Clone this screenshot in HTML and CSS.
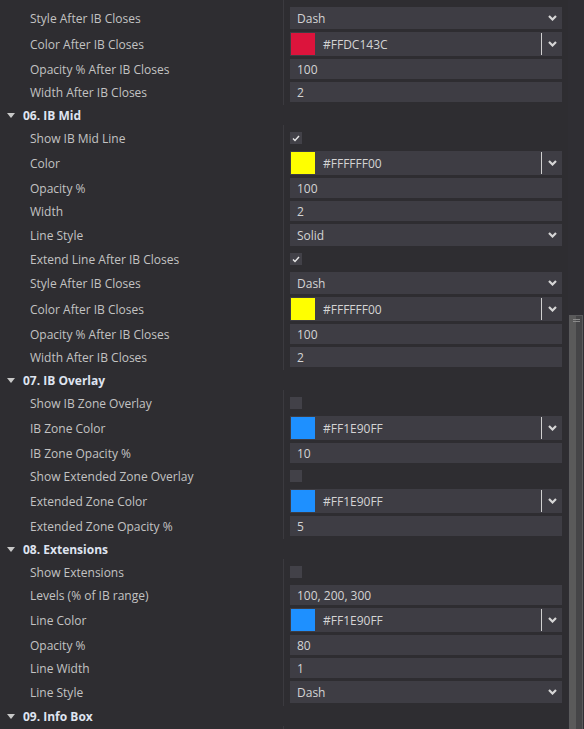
FILE: index.html
```html
<!DOCTYPE html>
<html lang="en">
<head>
  <meta charset="UTF-8" />
  <title>Indicator Settings</title>
  <link rel="stylesheet" href="styles.css">
</head>
<body>

<div class="panel">

  <div class="section-body first">
    <div class="row"><span class="label">Style After IB Closes</span><div class="select">Dash<span class="chev"><svg width="9" height="6" viewBox="0 0 9 6"><path d="M1 1 L4.5 4.5 L8 1" /></svg></span></div></div>
    <div class="row"><span class="label">Color After IB Closes</span><div class="color"><span class="swatch red"></span><span class="hex">#FFDC143C</span><span class="sep"></span><span class="chev"><svg width="9" height="6" viewBox="0 0 9 6"><path d="M1 1 L4.5 4.5 L8 1" /></svg></span></div></div>
    <div class="row"><span class="label">Opacity % After IB Closes</span><div class="input">100</div></div>
    <div class="row"><span class="label">Width After IB Closes</span><div class="input">2</div></div>
  </div>

  <div class="section-head"><span class="tri"></span>06. IB Mid</div>
  <div class="section-body">
    <div class="row check-row"><span class="label">Show IB Mid Line</span><span class="checkbox on"><svg width="8" height="7" viewBox="0 0 8 7"><path d="M1 3.5 L3 5.5 L7 1" /></svg></span></div>
    <div class="row"><span class="label">Color</span><div class="color"><span class="swatch yellow"></span><span class="hex">#FFFFFF00</span><span class="sep"></span><span class="chev"><svg width="9" height="6" viewBox="0 0 9 6"><path d="M1 1 L4.5 4.5 L8 1" /></svg></span></div></div>
    <div class="row"><span class="label">Opacity %</span><div class="input">100</div></div>
    <div class="row"><span class="label">Width</span><div class="input">2</div></div>
    <div class="row"><span class="label">Line Style</span><div class="select">Solid<span class="chev"><svg width="9" height="6" viewBox="0 0 9 6"><path d="M1 1 L4.5 4.5 L8 1" /></svg></span></div></div>
    <div class="row check-row"><span class="label">Extend Line After IB Closes</span><span class="checkbox on"><svg width="8" height="7" viewBox="0 0 8 7"><path d="M1 3.5 L3 5.5 L7 1" /></svg></span></div>
    <div class="row"><span class="label">Style After IB Closes</span><div class="select">Dash<span class="chev"><svg width="9" height="6" viewBox="0 0 9 6"><path d="M1 1 L4.5 4.5 L8 1" /></svg></span></div></div>
    <div class="row"><span class="label">Color After IB Closes</span><div class="color"><span class="swatch yellow"></span><span class="hex">#FFFFFF00</span><span class="sep"></span><span class="chev"><svg width="9" height="6" viewBox="0 0 9 6"><path d="M1 1 L4.5 4.5 L8 1" /></svg></span></div></div>
    <div class="row"><span class="label">Opacity % After IB Closes</span><div class="input">100</div></div>
    <div class="row"><span class="label">Width After IB Closes</span><div class="input">2</div></div>
  </div>

  <div class="section-head"><span class="tri"></span>07. IB Overlay</div>
  <div class="section-body">
    <div class="row check-row"><span class="label">Show IB Zone Overlay</span><span class="checkbox"></span></div>
    <div class="row"><span class="label">IB Zone Color</span><div class="color"><span class="swatch blue"></span><span class="hex">#FF1E90FF</span><span class="sep"></span><span class="chev"><svg width="9" height="6" viewBox="0 0 9 6"><path d="M1 1 L4.5 4.5 L8 1" /></svg></span></div></div>
    <div class="row"><span class="label">IB Zone Opacity %</span><div class="input">10</div></div>
    <div class="row check-row"><span class="label">Show Extended Zone Overlay</span><span class="checkbox"></span></div>
    <div class="row"><span class="label">Extended Zone Color</span><div class="color"><span class="swatch blue"></span><span class="hex">#FF1E90FF</span><span class="sep"></span><span class="chev"><svg width="9" height="6" viewBox="0 0 9 6"><path d="M1 1 L4.5 4.5 L8 1" /></svg></span></div></div>
    <div class="row"><span class="label">Extended Zone Opacity %</span><div class="input">5</div></div>
  </div>

  <div class="section-head"><span class="tri"></span>08. Extensions</div>
  <div class="section-body">
    <div class="row check-row"><span class="label">Show Extensions</span><span class="checkbox"></span></div>
    <div class="row"><span class="label">Levels (% of IB range)</span><div class="input">100, 200, 300</div></div>
    <div class="row"><span class="label">Line Color</span><div class="color"><span class="swatch blue"></span><span class="hex">#FF1E90FF</span><span class="sep"></span><span class="chev"><svg width="9" height="6" viewBox="0 0 9 6"><path d="M1 1 L4.5 4.5 L8 1" /></svg></span></div></div>
    <div class="row"><span class="label">Opacity %</span><div class="input">80</div></div>
    <div class="row"><span class="label">Line Width</span><div class="input">1</div></div>
    <div class="row"><span class="label">Line Style</span><div class="select">Dash<span class="chev"><svg width="9" height="6" viewBox="0 0 9 6"><path d="M1 1 L4.5 4.5 L8 1" /></svg></span></div></div>
  </div>

  <div class="section-head"><span class="tri"></span>09. Info Box</div>
  <div class="section-body"></div>

</div>

<div class="scrollbar">
  <div class="thumb"><span class="grip"></span></div>
</div>

</body>
</html>
```

FILE: styles.css
```css
* {
  box-sizing: border-box;
  margin: 0;
  padding: 0;
}

body {
  background-color: #2e2d31;
  font-family: "Open Sans", Arial, sans-serif;
  font-size: 12px;
  color: #c3c3c3;
  display: flex;
  height: 729px;
  overflow: hidden;
}

.panel {
  width: 568px;
  flex: none;
}

/* section header with the little down triangle */
.section-head {
  height: 20px;
  display: flex;
  align-items: center;
  padding-left: 7px;
  font-weight: bold;
  color: #dfe4f0;
}

.tri {
  width: 0;
  height: 0;
  border-left: 4.5px solid transparent;
  border-right: 4.5px solid transparent;
  border-top: 5px solid #c8c8c8;
  margin-right: 8px;
}

/* rows of a section, with the divider line between labels and inputs */
.section-body {
  display: flex;
  flex-direction: column;
  gap: 3px;
  padding: 3px 0;
  background: linear-gradient(#3b3a3f, #3b3a3f) 283px 0 / 1px 100% no-repeat;
}

.section-body.first {
  padding-top: 7px;
}

.section-body:empty {
  padding: 0;
  height: 10px;
}

.row {
  display: grid;
  grid-template-columns: 290px 272px;
  align-items: center;
}

.check-row {
  height: 20px;
}

.label {
  padding-left: 30px;
  white-space: nowrap;
}

.input,
.select,
.color {
  background-color: #3e3d44;
  color: #d4d4d4;
  display: flex;
  align-items: center;
}

.input {
  height: 20px;
  padding-left: 7px;
}

.select {
  height: 22px;
  padding-left: 7px;
  justify-content: space-between;
}

.color {
  height: 24px;
}

.swatch {
  width: 24px;
  height: 22px;
  margin-left: 1px;
}

.swatch.red { background-color: #dc143c; }
.swatch.yellow { background-color: #ffff00; }
.swatch.blue { background-color: #1e90ff; }

.hex {
  margin-left: 8px;
  flex: 1;
}

.sep {
  width: 1px;
  height: 22px;
  background-color: #d0d0d0;
}

.chev {
  width: 20px;
  display: flex;
  justify-content: center;
  align-items: center;
}

.chev path,
.checkbox path {
  fill: none;
  stroke: #d6d6d6;
  stroke-width: 2.2;
}

.checkbox {
  width: 12px;
  height: 12px;
  background-color: #424148;
  display: flex;
  align-items: center;
  justify-content: center;
}

.checkbox path {
  stroke-width: 1.4;
  stroke: #e8e8e8;
}

/* right scroll bar */
.scrollbar {
  flex: 1;
  padding-top: 315px;
  padding-left: 1px;
  padding-right: 1px;
  background-color: #2f2e33;
}

.thumb {
  height: 430px;
  border: 1px solid #5a5a5c;
  background: linear-gradient(to right, #5a5a5a 0, #5a5a5a 6px, #454547 6px);
}

.grip {
  display: block;
  margin: 3px 2px 0 3px;
  height: 3px;
  border-top: 1px solid #8a8a8a;
  border-bottom: 1px solid #8a8a8a;
}
```
